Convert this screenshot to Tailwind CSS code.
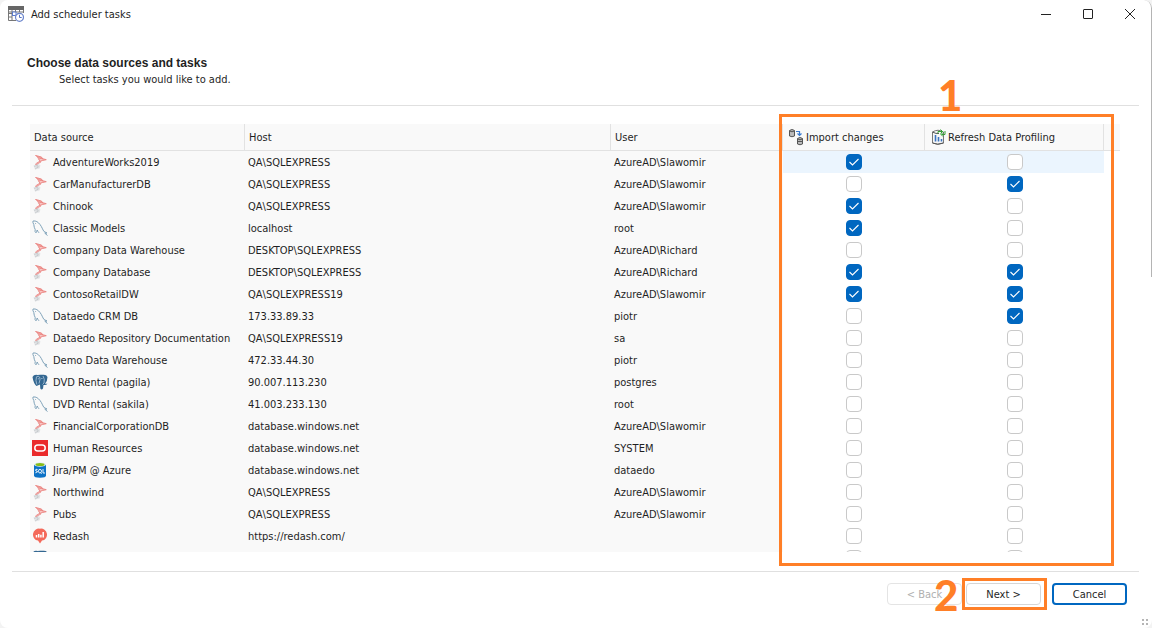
<!DOCTYPE html>
<html lang="en">
<head>
<meta charset="utf-8">
<title>Add scheduler tasks</title>
<script src="https://cdn.jsdelivr.net/npm/@tailwindcss/browser@4"></script>
</head>
<body class="bg-[#f3f3f3] text-[11px] leading-4 text-[#1f1f1f] font-['DejaVu_Sans_Condensed','Noto_Sans',sans-serif]">
<svg class="hidden" aria-hidden="true">
  <symbol id="mssql" viewBox="0 0 16 16">
    <path d="M1.500 11.500 6 9.500 8.500 11.500 7.500 14.500 3 15.500Z" fill="#e2e4e6"/><path d="M2 12.500 6 11M3 15 7 12.500M5 10.500 5.500 14" stroke="#c3c7ca" stroke-width=".7" fill="none"/>
    <path d="M3.500 1.500Q6 1.500 9 2.500L10.500 4.500 14.500 5.500 10 7 4 10.500 7.500 7 6.500 4Z" fill="#f8c6c4"/>
    <path d="M3.500 1.500Q7 4.500 14.500 5.700M3.500 1.500 9.500 3 11 5.500M3 10.700Q6 7 14 5.800M5.500 3 8 7.500M9.500 3 7 5.500M4 10.500 9 8" stroke="#e87c79" stroke-width=".8" fill="none"/>
  </symbol>
  <symbol id="mysql" viewBox="0 0 16 16">
    <path d="M1 1C4 .5 6 2 8 4.500 10 7 10.500 9.500 12 11.500L15 13 12.800 13.200 15.500 15.500M1 1Q.5 2.500 1.800 4.500 2 7.500 3.200 9.500 2.500 12 4 12.800 5 11 5.200 10 6 12 7 12.800" fill="none" stroke="#7fa2b9" stroke-width="1"/><circle cx="3.600" cy="3.600" r=".5" fill="#7fa2b9"/>
  </symbol>
  <symbol id="pg" viewBox="0 0 16 16">
    <path d="M.5 3Q2 .2 5.500 1 8 .4 10 .8 14.500 0 15.500 3 15.500 7 13 9.800L15.500 9.800Q14 11.500 11.500 11L11 14.500Q9.500 16.300 8.300 14.500L8 10.500 4.500 12Q1.500 9.500 .5 3Z" fill="#336791"/>
    <path d="M4.500 2.500Q3.300 6.500 4.800 10.500M5 2.500Q8 1.500 8 5.500L7 9.500M11 2Q13 5 12 9L10.500 10.500M9.200 4.500H10.500M5.800 4.800H7" stroke="#c3d6e5" stroke-width=".7" fill="none"/>
  </symbol>
  <symbol id="oracle" viewBox="0 0 16 16"><path d="M0 0H16V16H0Z" fill="#ea2a2b"/><rect x="2.800" y="5" width="10.400" height="6" rx="3" fill="none" stroke="#fff" stroke-width="1.500"/></symbol>
  <symbol id="azure" viewBox="0 0 16 16">
    <path d="M2 2.500H14V13.500Q14 15.700 8 15.700T2 13.500Z" fill="#0d72c6"/><ellipse cx="8" cy="2.500" rx="6" ry="2.200" fill="#e6eff6"/><ellipse cx="8" cy="2.500" rx="4.500" ry="1.500" fill="#86bc18"/>
    <path d="M5.500 7.500Q3.500 6.800 3.500 8T5.300 9.300 3.400 10.800M8 7.300Q6.500 7.300 6.500 9.200T8 11 9.500 9.200 8 7.300M8.500 10.500 9.700 11.700M11 7V11H13" stroke="#fff" stroke-width=".9" fill="none"/>
  </symbol>
  <symbol id="redash" viewBox="0 0 16 16">
    <path d="M8 .7A6 6 0 0 1 10 12.600L8 15.500 6 12.600A6 6 0 0 1 8 .7Z" fill="#f4695a"/><path d="M4.500 7V9.500M6.700 6V9.500M8.900 6.800V9.500M11.200 4V9.500" stroke="#fff" stroke-width="1.500"/>
  </symbol>
  <symbol id="check" viewBox="0 0 16 16"><path d="M3.500 8 6.500 11 12.500 5" fill="none" stroke="#fff" stroke-width="1.100"/></symbol>
</svg>

<div class="relative flex h-screen flex-col overflow-hidden rounded-lg bg-white">
  <div class="absolute right-0 top-0 h-[277px] w-2 rounded-tr-lg border-r border-[#b4b4b4]"></div>
  <header class="flex h-7 shrink-0 items-center justify-between pl-2 pr-2.5">
    <div class="flex items-center gap-[7px]">
      <svg class="size-4" viewBox="0 0 16 16" aria-hidden="true">
        <path d="M0 0H16V4H0Z" fill="#666"/><path d="M.5 4V14.500H8M4 4V14.500M.5 7.500H4M.5 11H4M7.500 4V6M11.500 4V6M15.500 4V7M1 6H15" fill="none" stroke="#777"/>
        <rect x="4.500" y="6" width="3.500" height="3.500" fill="#fff" stroke="#5b7bcb"/><circle cx="11.500" cy="11.300" r="4" fill="#fff" stroke="#6c86cc" stroke-width="1.200"/><path d="M11.500 8.800V11.500H13.700" fill="none" stroke="#5674c4"/>
      </svg>
      <span class="pt-0.5">Add scheduler tasks</span>
    </div>
    <div class="flex gap-[18px]">
      <button class="grid size-6 place-items-center" aria-label="Minimize"><svg class="size-3" viewBox="0 0 12 12"><path d="M1 6.500H11" stroke="#222"/></svg></button>
      <button class="grid size-6 place-items-center" aria-label="Maximize"><svg class="size-3" viewBox="0 0 12 12"><rect x="1.500" y="1.500" width="9" height="9" rx=".5" fill="none" stroke="#222"/></svg></button>
      <button class="grid size-6 place-items-center" aria-label="Close"><svg class="size-3" viewBox="0 0 12 12"><path d="M1 1 11 11M11 1 1 11" stroke="#222"/></svg></button>
    </div>
  </header>

  <main class="ml-3 mr-[13px] flex min-h-0 flex-1 flex-col">
    <div class="h-[78px] shrink-0 border-b border-[#e0e0e0] pl-[15px] pt-[27px]">
      <h1 class="font-['Liberation_Sans',sans-serif] text-xs font-bold leading-4">Choose data sources and tasks</h1>
      <p class="pl-8 pt-px">Select tasks you would like to add.</p>
    </div>

    <div class="relative mb-[19px] ml-[18px] mr-[19px] mt-[18px] min-h-0 flex-1">
      <div class="h-full overflow-hidden">
        <table class="w-full table-fixed border-separate border-spacing-0 whitespace-nowrap">
          <colgroup><col class="w-[215px]"><col><col class="w-[172px]"><col class="w-[142px]"><col class="w-[179px]"><col class="w-4"></colgroup>
          <thead>
            <tr class="h-[27px] bg-[#f9f9f9] text-left">
              <th class="border-b border-r border-[#e2e2e2] px-1 pb-0 pt-0.5 font-normal">Data source</th>
              <th class="border-b border-r border-[#e2e2e2] px-1 pb-0 pt-0.5 font-normal">Host</th>
              <th class="border-b border-r border-[#e2e2e2] px-1 pb-0 pt-0.5 font-normal">User</th>
              <th class="border-b border-r border-[#e2e2e2] p-0 pl-1 font-normal">
                <div class="flex items-center gap-px">
                  <svg class="size-[18px]" viewBox="0 0 18 18" aria-hidden="true">
                    <path d="M2.500 2.500V8Q5 9.500 7.500 8V2.500Q5 .5 2.500 2.500Z" fill="#bbb" stroke="#555"/><path d="M2.500 3Q5 4.500 7.500 3" fill="none" stroke="#555"/>
                    <path d="M10.500 10.500V16Q13 17.500 15.500 16V10.500Q13 8.500 10.500 10.500Z" fill="#bbb" stroke="#555"/><path d="M10.500 11Q13 12.500 15.500 11M10.500 13.500H15.500" fill="none" stroke="#555"/>
                    <path d="M9 3.500H12.500V7M10.500 5.500 12.500 7.500 14.500 5.500" fill="none" stroke="#3a7bd0" stroke-width="1.200"/>
                  </svg><span class="pt-0.5">Import changes</span>
                </div>
              </th>
              <th class="border-b border-r border-[#e2e2e2] p-0 pl-1.5 font-normal">
                <div class="flex items-center gap-px">
                  <svg class="size-4" viewBox="0 0 16 16" aria-hidden="true">
                    <path d="M1.500 3V14Q6.500 16.500 12.500 14V3Q7-.5 1.500 3Z" fill="#f6f6f6" stroke="#777"/><path d="M1.500 3Q5 5 8 4.500M1.500 14Q6.500 16.500 12.500 14" fill="none" stroke="#555"/>
                    <path d="M4.500 6V12.500M7.500 8V12.500M10.500 10V12.500" stroke="#3a73c0" stroke-width="1.600"/>
                    <path d="M7 4.500V2.500H11.500M9.500 .5 11.500 2.500 9.500 4.500M14 2V5.500H10.500M12 3.500 10 5.500 12 7.500" fill="none" stroke="#35a135"/>
                  </svg><span class="pt-0.5">Refresh Data Profiling</span>
                </div>
              </th>
              <th class="border-b border-[#e2e2e2]" aria-label="Spacer"></th>
            </tr>
          </thead>
          <tbody id="rows"></tbody>
        </table>
      </div>
      <div class="pointer-events-none absolute -bottom-3.5 -top-2.5 right-1.5 w-[335px] border-3 border-[#ff7f27]">
        <span class="absolute -top-[46px] left-[156px] font-['Lato',sans-serif] text-[42px] font-black leading-12 text-[#ff7f27]">1</span>
      </div>
    </div>
  </main>

  <footer class="ml-3 mr-[13px] flex h-[57px] shrink-0 items-start justify-end border-t border-[#e0e0e0] pr-3 pt-[11px]">
    <button disabled class="mr-1 h-[22px] w-[75px] rounded border border-[#e4e4e4] pt-px text-[#b0b0b0]">&lt; Back</button>
    <div class="relative mr-[11px]">
      <button class="block h-[22px] w-[75px] rounded border border-[#d6d6d6] pt-px">Next &gt;</button>
      <div class="pointer-events-none absolute -inset-y-[5px] -left-1 -right-1.5 border-3 border-[#ff7f27]"></div>
      <span class="pointer-events-none absolute -left-8 -top-3 font-['Lato',sans-serif] text-[42px] font-black leading-12 text-[#ff7f27]">2</span>
    </div>
    <button class="h-[22px] w-[75px] rounded border-2 border-[#0067c0] pt-px">Cancel</button>
  </footer>
  <svg class="absolute bottom-0 right-0 size-2.5" viewBox="0 0 10 10" aria-hidden="true"><path d="M0 1H2V3H0ZM4 1H6V3H4ZM0 5H2V7H0ZM4 5H6V7H4Z" fill="#b5b5b5"/></svg>
</div>

<script>
const data = [
  ["mssql", "AdventureWorks2019", "QA\\SQLEXPRESS", "AzureAD\\Slawomir", 1, 0],
  ["mssql", "CarManufacturerDB", "QA\\SQLEXPRESS", "AzureAD\\Slawomir", 0, 1],
  ["mssql", "Chinook", "QA\\SQLEXPRESS", "AzureAD\\Slawomir", 1, 0],
  ["mysql", "Classic Models", "localhost", "root", 1, 0],
  ["mssql", "Company Data Warehouse", "DESKTOP\\SQLEXPRESS", "AzureAD\\Richard", 0, 0],
  ["mssql", "Company Database", "DESKTOP\\SQLEXPRESS", "AzureAD\\Richard", 1, 1],
  ["mssql", "ContosoRetailDW", "QA\\SQLEXPRESS19", "AzureAD\\Slawomir", 1, 1],
  ["mysql", "Dataedo CRM DB", "173.33.89.33", "piotr", 0, 1],
  ["mssql", "Dataedo Repository Documentation", "QA\\SQLEXPRESS19", "sa", 0, 0],
  ["mysql", "Demo Data Warehouse", "472.33.44.30", "piotr", 0, 0],
  ["pg", "DVD Rental (pagila)", "90.007.113.230", "postgres", 0, 0],
  ["mysql", "DVD Rental (sakila)", "41.003.233.130", "root", 0, 0],
  ["mssql", "FinancialCorporationDB", "database.windows.net", "AzureAD\\Slawomir", 0, 0],
  ["oracle", "Human Resources", "database.windows.net", "SYSTEM", 0, 0],
  ["azure", "Jira/PM @ Azure", "database.windows.net", "dataedo", 0, 0],
  ["mssql", "Northwind", "QA\\SQLEXPRESS", "AzureAD\\Slawomir", 0, 0],
  ["mssql", "Pubs", "QA\\SQLEXPRESS", "AzureAD\\Slawomir", 0, 0],
  ["redash", "Redash", "https://redash.com/", "", 0, 0],
  ["pg", "", "", "", 0, 0]
];
const box = (on, label) => `<span class="relative mx-auto block size-4"><input type="checkbox" aria-label="${label}" ${on ? "checked" : ""} class="peer block size-4 appearance-none rounded border border-[#c9c9c9] bg-white checked:border-[#0067c0] checked:bg-[#0067c0]"><svg class="pointer-events-none absolute inset-0 hidden size-4 peer-checked:block"><use href="#check"/></svg></span>`;
document.getElementById("rows").innerHTML = data.map(([icon, name, host, user, imp, prof], i) => {
  const tint = i === 0 ? "bg-[#ebf5fe]" : "bg-white";
  return `<tr class="h-[22px]">
    <td class="bg-[#f9f9f9] p-0 pl-0.5"><div class="flex items-center gap-[5px]"><svg class="size-4 shrink-0"><use href="#${icon}"/></svg><span class="pt-0.5">${name}</span></div></td>
    <td class="bg-[#f9f9f9] p-0 pl-[3px] pt-0.5">${host}</td>
    <td class="bg-[#f9f9f9] p-0 pl-[3px] pt-0.5">${user}</td>
    <td class="${tint} p-0">${box(imp, "Import changes " + name)}</td>
    <td class="${tint} p-0">${box(prof, "Refresh Data Profiling " + name)}</td>
    <td class="p-0"></td></tr>`;
}).join("");
</script>
</body>
</html>
